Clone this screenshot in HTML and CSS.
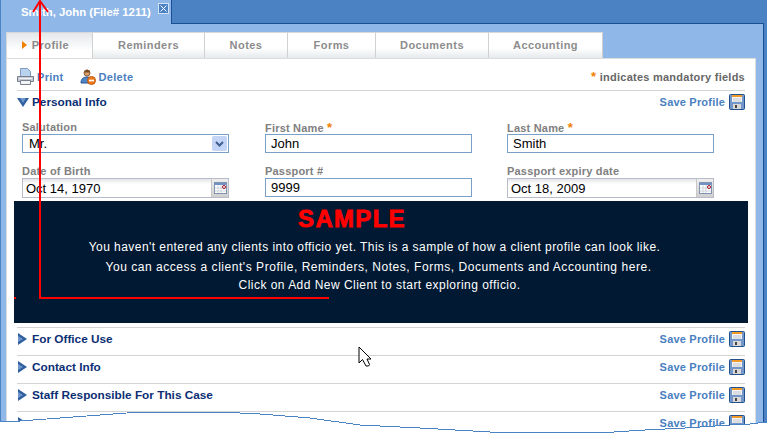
FILE: index.html
```html
<!DOCTYPE html>
<html lang="en">
<head>
  <meta charset="UTF-8">
  <title>Client Profile</title>
  <link rel="stylesheet" href="styles.css">
</head>
<body>

<svg class="sprites" width="0" height="0">
  <symbol id="floppy" viewBox="0 0 16 16">
    <rect x="0.5" y="0.5" width="15" height="15" rx="1" fill="#7397c8" stroke="#23508c"/>
    <rect x="3" y="1" width="10" height="7" fill="#f4f4f4"/>
    <rect x="3" y="1" width="10" height="2" fill="#f09a2a"/>
    <path d="M4 5h8M4 7h8" stroke="#c4c8d0"/>
    <rect x="4" y="10" width="8" height="5" fill="#d8d8d8"/>
    <rect x="6" y="11" width="2" height="3" fill="#444"/>
  </symbol>
  <symbol id="calendar" viewBox="0 0 13 12">
    <rect x="0.5" y="0.5" width="12" height="11" fill="#fff" stroke="#7f93b0"/>
    <rect x="1" y="1" width="11" height="2" fill="#6f93c4"/>
    <path d="M1 6h11M1 9h11M4 3v8M7 3v8" stroke="#cfd4dc"/>
    <circle cx="10" cy="5" r="1.500" fill="#fff" stroke="#a01020"/>
  </symbol>
  <symbol id="closed-arrow" viewBox="0 0 9 12">
    <path d="M0 0L9 6L0 12Z" fill="#2f5f9e"/>
    <path d="M0 3L5 6L0 9Z" fill="#6f97cc"/>
  </symbol>
</svg>

<div class="window">
  <div class="titlebar">
    <div class="file-tab">
      <span class="file-name">Smith, John (File# 1211)</span>
      <span class="close-btn">
        <svg width="7" height="7" viewBox="0 0 7 7"><path d="M0.500 0.500L6.500 6.500M6.500 0.500L0.500 6.500" stroke="#fff"/></svg>
      </span>
    </div>
    <div class="titlebar-fill"></div>
  </div>

  <div class="frame">
    <div class="tabs">
      <div class="tab tab-active"><span class="tab-marker"></span>Profile</div>
      <div class="tab tab-reminders">Reminders</div>
      <div class="tab tab-notes">Notes</div>
      <div class="tab tab-forms">Forms</div>
      <div class="tab tab-documents">Documents</div>
      <div class="tab tab-accounting">Accounting</div>
    </div>

    <div class="panel">
      <div class="toolbar">
        <a class="tool">
          <svg width="17" height="17" viewBox="0 0 17 17">
            <path d="M3.500 .5h7l3 3v5h-10Z" fill="#b9d2ee" stroke="#7f9cc0"/>
            <path d="M.5 8.500h16v5h-16Z" fill="#c4c8d0" stroke="#77808c"/>
            <path d="M3.500 12.500h10v4h-10Z" fill="#f4f4f4" stroke="#77808c"/>
            <path d="M2 10.500h13" stroke="#f2f4f6"/>
          </svg>
          Print
        </a>
        <a class="tool">
          <svg width="16" height="16" viewBox="0 0 16 16">
            <circle cx="7" cy="4" r="3" fill="#d9a070" stroke="#8a5a30"/>
            <path d="M4.500 3L7 .6L9.800 2V3.500H4.500Z" fill="#7a4a20"/>
            <path d="M1 14c0-4 2-6 6-6s5 2 5 6Z" fill="#4f86c8" stroke="#2c5590"/>
            <circle cx="11.500" cy="11.500" r="4" fill="#ee7a1c" stroke="#c05a10"/>
            <path d="M9 11.500h5" stroke="#fff" stroke-width="1.600"/>
          </svg>
          Delete
        </a>
        <div class="mandatory-note"><span class="required">*</span> indicates mandatory fields</div>
      </div>

      <div class="section">
        <div class="section-title">
          <svg class="arrow-open" width="12" height="9" viewBox="0 0 12 9">
            <path d="M0 0H12L6 9Z" fill="#2f5f9e"/>
            <path d="M3 0H9L6 5Z" fill="#6f97cc"/>
          </svg>
          Personal Info
        </div>
        <a class="save-link">Save Profile <svg width="16" height="16"><use href="#floppy"/></svg></a>
      </div>

      <div class="form-grid">
        <div class="field">
          <label>Salutation</label>
          <div class="select-box">
            <select><option>Mr.</option></select>
            <span class="select-arrow">
              <svg width="9" height="6" viewBox="0 0 9 6"><path d="M1 1L4.500 4.500L8 1" fill="none" stroke="#3f5f90" stroke-width="2"/></svg>
            </span>
          </div>
        </div>
        <div class="field">
          <label>First Name <span class="required">*</span></label>
          <input class="text-input" type="text" value="John">
        </div>
        <div class="field">
          <label>Last Name <span class="required">*</span></label>
          <input class="text-input" type="text" value="Smith">
        </div>
        <div class="field">
          <label>Date of Birth</label>
          <div class="date-box">
            <input type="text" value="Oct 14, 1970">
            <span class="date-btn"><svg width="13" height="12"><use href="#calendar"/></svg></span>
          </div>
        </div>
        <div class="field">
          <label>Passport #</label>
          <input class="text-input" type="text" value="9999">
        </div>
        <div class="field">
          <label>Passport expiry date</label>
          <div class="date-box">
            <input type="text" value="Oct 18, 2009">
            <span class="date-btn"><svg width="13" height="12"><use href="#calendar"/></svg></span>
          </div>
        </div>
      </div>

      <div class="sample-banner">
        <h1>SAMPLE</h1>
        <p class="line-one">You haven't entered any clients into officio yet. This is a sample of how a client profile can look like.</p>
        <p class="line-two">You can access a client's Profile, Reminders, Notes, Forms, Documents and Accounting here.</p>
        <p class="line-three">Click on Add New Client to start exploring officio.</p>
      </div>

      <div class="section collapsed">
        <div class="section-title"><svg class="arrow-closed" width="9" height="12"><use href="#closed-arrow"/></svg>For Office Use</div>
        <a class="save-link">Save Profile <svg width="16" height="16"><use href="#floppy"/></svg></a>
      </div>
      <div class="section collapsed">
        <div class="section-title"><svg class="arrow-closed" width="9" height="12"><use href="#closed-arrow"/></svg>Contact Info</div>
        <a class="save-link">Save Profile <svg width="16" height="16"><use href="#floppy"/></svg></a>
      </div>
      <div class="section collapsed">
        <div class="section-title"><svg class="arrow-closed" width="9" height="12"><use href="#closed-arrow"/></svg>Staff Responsible For This Case</div>
        <a class="save-link">Save Profile <svg width="16" height="16"><use href="#floppy"/></svg></a>
      </div>
      <div class="section collapsed">
        <div class="section-title"><svg class="arrow-closed" width="9" height="12"><use href="#closed-arrow"/></svg></div>
        <a class="save-link">Save Profile <svg width="16" height="16"><use href="#floppy"/></svg></a>
      </div>
    </div>
  </div>

  <!-- torn edge at the bottom of the screenshot -->
  <svg class="torn-edge" width="767" height="433" viewBox="0 0 767 433">
    <path d="M0 422L20 421L60 418L100 415L140 412L220 412L260 414L310 418L360 425L420 428L490 432L507 432L614 432L645 430L685 428L730 425L750 424L767 422V433H0Z" fill="#fff"/>
    <path d="M0 422L20 421L60 418L100 415L140 412L220 412L260 414L310 418L360 425L420 428L490 432L507 432L614 432L645 430L685 428L730 425L750 424L767 422" fill="none" stroke="#4a82c4"/>
  </svg>

  <!-- red annotation arrow -->
  <svg class="annotation" width="767" height="433" viewBox="0 0 767 433">
    <path d="M329 298H40V1M33 12L40 1L48 12" fill="none" stroke="#f00" stroke-width="2"/>
    <path d="M14 298h2" stroke="#f00" stroke-width="2"/>
  </svg>

  <svg class="cursor" width="14" height="21" viewBox="0 0 14 21">
    <path d="M1 1V17L4.500 13.500L8 20H10.500L11.500 18.500L9 13H13Z" fill="#fff" stroke="#000"/>
  </svg>
</div>

</body>
</html>
```

FILE: styles.css
```css
* {
  box-sizing: border-box;
}

body {
  margin: 0;
  font-family: "Liberation Sans", Arial, sans-serif;
  font-size: 11px;
  overflow: hidden;
}

.sprites {
  position: absolute;
}

.window {
  position: relative;
  width: 767px;
  height: 433px;
  overflow: hidden;
  background: #4a82c4;
}

.titlebar {
  display: flex;
  height: 24px;
}

.file-tab {
  display: flex;
  width: 172px;
  padding: 3px 2px 0 20px;
  justify-content: space-between;
  background: #8fb8e8;
  border-left: 1px solid #4a82c4;
  border-right: 1px solid #1d4f94;
}

.file-name {
  color: #fff;
  font-weight: bold;
  font-size: 11.4px;
  line-height: 18px;
  white-space: nowrap;
}

.close-btn {
  display: flex;
  width: 11px;
  height: 11px;
  align-items: center;
  justify-content: center;
  background: #4a82c4;
  border: 1px solid #d4e2f4;
}

.titlebar-fill {
  flex: 1;
  margin-right: 3px;
  border-bottom: 1px solid #1d4f94;
}

.frame {
  height: 409px;
  margin-right: 3px;
  padding: 8px 7px 0 5px;
  background: #8fb8e8;
  border-left: 1px solid #4a82c4;
  border-right: 1px solid #1d4f94;
}

.tabs {
  display: flex;
  height: 26px;
}

.tab {
  display: flex;
  align-items: center;
  justify-content: center;
  height: 26px;
  padding-bottom: 2px;
  color: #8c8c8c;
  font-weight: bold;
  font-size: 11px;
  letter-spacing: 0.45px;
  background: linear-gradient(#fff 60%, #e6eaec);
  border-top: 1px solid #d8d8d8;
  border-right: 1px solid #d0d0d0;
}

.tab-active {
  width: 87px;
  padding-right: 8px;
  background: linear-gradient(#e4e8ea, #fff 70%);
  border-left: 1px solid #d8d8d8;
}

.tab-marker {
  width: 0;
  height: 0;
  margin-right: 5px;
  border-left: 5px solid #f08000;
  border-top: 4px solid transparent;
  border-bottom: 4px solid transparent;
}

.tab-reminders { width: 112px; }
.tab-notes { width: 83px; }
.tab-forms { width: 88px; }
.tab-documents { width: 113px; }
.tab-accounting { width: 114px; }

.panel {
  height: 375px;
  padding: 0 10px;
  background: #fff;
  border: 1px solid #dcdcdc;
  border-bottom: 0;
}

.toolbar {
  display: flex;
  align-items: center;
  gap: 16px;
  height: 32px;
  padding-top: 4px;
  border-bottom: 1px solid #d4d4d4;
}

.tool {
  display: flex;
  align-items: center;
  gap: 3px;
  color: #4a80c0;
  font-weight: bold;
  letter-spacing: 0.3px;
}

.mandatory-note {
  margin-left: auto;
  color: #666;
  font-weight: bold;
  letter-spacing: 0.25px;
}

.required {
  color: #f08000;
  font-size: 13px;
}

.section {
  display: flex;
  align-items: center;
  justify-content: space-between;
  height: 23px;
  padding-bottom: 1px;
}

.section.collapsed {
  height: 28px;
  padding-bottom: 5px;
  border-top: 1px solid #d4d4d4;
}

.section-title {
  display: flex;
  align-items: center;
  gap: 5px;
  color: #0c2f74;
  font-weight: bold;
  font-size: 11.8px;
}

.arrow-open {
  margin-right: -2px;
}

.arrow-closed {
  margin: 0 0 0 1px;
}

.save-link {
  display: flex;
  align-items: center;
  gap: 4px;
  color: #4a80c0;
  font-weight: bold;
  letter-spacing: 0.2px;
}

.form-grid {
  display: grid;
  grid-template-columns: 243px 242px 207px;
  align-content: start;
  row-gap: 12px;
  padding: 7px 0 0 5px;
  height: 87px;
}

.field {
  display: flex;
  flex-direction: column;
  width: 207px;
}

.field label {
  height: 13px;
  color: #808080;
  font-weight: bold;
  line-height: 13px;
  letter-spacing: 0.2px;
}

.text-input {
  width: 207px;
  height: 19px;
  padding: 0 5px;
  font: 13px "Liberation Sans", Arial, sans-serif;
  color: #000;
  background: #fff;
  border: 1px solid #7ba0c8;
  border-radius: 0;
  outline: none;
}

.select-box {
  position: relative;
  width: 207px;
  height: 19px;
}

.select-box select {
  width: 100%;
  height: 100%;
  padding: 0 6px;
  font: 13px "Liberation Sans", Arial, sans-serif;
  color: #000;
  background: #fff;
  border: 1px solid #7ba0c8;
  border-radius: 0;
  appearance: none;
}

.select-arrow {
  position: absolute;
  top: 2px;
  right: 2px;
  display: flex;
  width: 15px;
  height: 15px;
  align-items: center;
  justify-content: center;
  background: #c4d4f6;
  border-radius: 2px;
}

.date-box {
  display: flex;
  width: 207px;
  height: 20px;
  background: linear-gradient(#e6e6ea, #fff 30%);
  border: 1px solid #b8bcc8;
}

.date-box input {
  flex: 1;
  min-width: 0;
  padding: 0 3px;
  font: 13px "Liberation Sans", Arial, sans-serif;
  color: #000;
  background: transparent;
  border: 0;
  outline: none;
}

.date-btn {
  display: flex;
  width: 17px;
  align-items: center;
  justify-content: center;
  background: linear-gradient(#eeeeee, #cfcfcf);
  border-left: 1px solid #c8c8c8;
}

.sample-banner {
  height: 122px;
  margin: 0 -3px 4px;
  padding-top: 4px;
  color: #fff;
  text-align: center;
  background: #011932;
}

.sample-banner h1 {
  margin: 0 58px 6px 0;
  color: #f00;
  font-size: 24px;
  line-height: 27px;
  letter-spacing: 1.3px;
  -webkit-text-stroke: 0.8px #f00;
}

.sample-banner p {
  margin: 0;
  font-size: 12px;
  line-height: 19px;
}

.sample-banner .line-one {
  margin: 0 13px 1px 0;
  letter-spacing: 0.45px;
}

.sample-banner .line-two {
  margin-right: 5px;
  letter-spacing: 0.54px;
}

.sample-banner .line-three {
  margin: -1px 3px 0 0;
  letter-spacing: 0.47px;
}

.torn-edge,
.annotation,
.cursor {
  position: absolute;
  left: 0;
  top: 0;
}

.torn-edge {
  shape-rendering: crispEdges;
}

.cursor {
  left: 358px;
  top: 346px;
}
```
